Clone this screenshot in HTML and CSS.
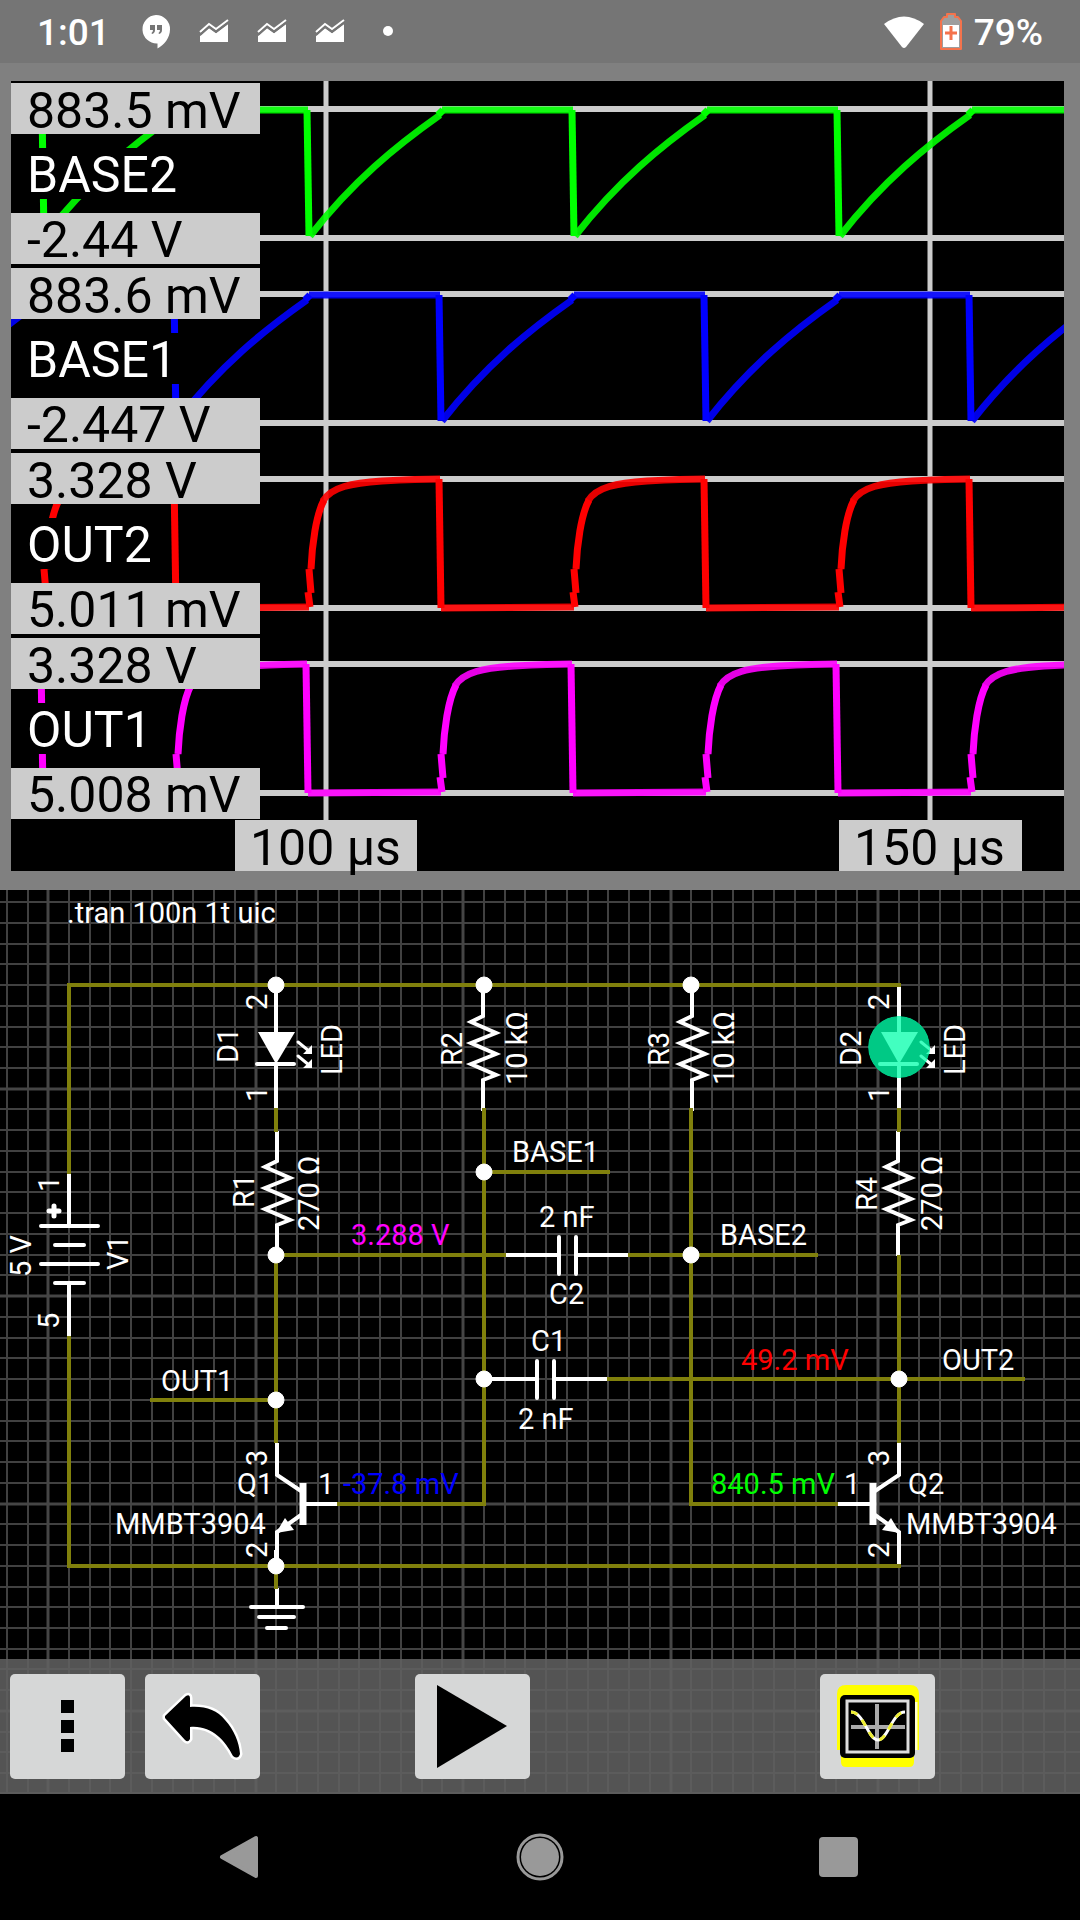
FILE: index.html
```html
<!DOCTYPE html>
<html lang="en">
<head>
<meta charset="utf-8">
<meta name="viewport" content="width=device-width, initial-scale=1">
<title>Circuit simulator</title>
<link rel="stylesheet" href="styles.css">
</head>
<body>
<header class="status">
  <span class="status-text">1:01</span>
  <div class="notices">
    <svg class="notice" viewBox="0 0 28 34" aria-hidden="true"><path fill="#fff" d="M14 0a14 14 0 0 1 14 14.500C28 23 22 30 15.500 33.500V28.500A14 14 0 0 1 14 0Z"/><path fill="#757575" d="M8 10h5v5q0 3-3 4l-.5-1q1.500-1 1.500-3H8zM15 10h5v5q0 3-3 4l-.5-1q1.500-1 1.500-3h-3z"/></svg>
    <svg class="notice" viewBox="0 -7 28 34" aria-hidden="true"><path fill="#fff" d="M0 20v-6l9-8 7 5L28 2v18z"/><path fill="none" stroke="#fff" stroke-width="2" d="M0 10l9-8 7 5L28-2"/><path fill="none" stroke="#757575" stroke-width="2" d="M0 13l9-8 7 5L28 1"/></svg>
    <svg class="notice" viewBox="0 -7 28 34" aria-hidden="true"><path fill="#fff" d="M0 20v-6l9-8 7 5L28 2v18z"/><path fill="none" stroke="#fff" stroke-width="2" d="M0 10l9-8 7 5L28-2"/><path fill="none" stroke="#757575" stroke-width="2" d="M0 13l9-8 7 5L28 1"/></svg>
    <svg class="notice" viewBox="0 -7 28 34" aria-hidden="true"><path fill="#fff" d="M0 20v-6l9-8 7 5L28 2v18z"/><path fill="none" stroke="#fff" stroke-width="2" d="M0 10l9-8 7 5L28-2"/><path fill="none" stroke="#757575" stroke-width="2" d="M0 13l9-8 7 5L28 1"/></svg>
    <svg class="notice" viewBox="0 0 28 34" aria-hidden="true"><circle cx="14" cy="16" r="5" fill="#fff"/></svg>
  </div>
  <div class="system">
    <svg class="wifi" viewBox="0 0 40 32" aria-hidden="true"><path fill="#fff" d="M0 8Q20-7 40 8L22 31q-2 2-4 0z"/></svg>
    <svg class="battery" viewBox="0 0 22 37" aria-hidden="true"><path fill="#9e9e9e" stroke="#f4734c" stroke-width="2" stroke-linejoin="round" d="M7 1h8v3h3l3 4v28H1V8l3-4h3z"/><path fill="#fff" d="M3 12h16v22H3z"/><path stroke="#f4734c" stroke-width="3" d="M11 13v14M5 20h12"/></svg>
    <span class="status-text">79%</span>
  </div>
</header>

<main>
<section class="scope" aria-label="Waveforms">
<svg class="drawing" viewBox="0 63 1080 827">
  <defs>
    <clipPath id="plot"><rect x="11" y="81" width="1053" height="790"/></clipPath>
    <g id="base-cycle">
      <path d="M307 110L309 236"/>
      <path class="slope" d="M310 236C353 181 396 146 440 115"/>
      <path d="M438 115L443 110"/>
      <path class="slope" d="M442 110H573"/>
    </g>
    <g id="out-cycle">
      <path d="M310 607L308 592M311 593L309 569M311 569C312 545 316 515 324 500"/>
      <path class="slope" d="M323 501C331 487 352 483 382 481C400 480 420 479 440 479"/>
      <path d="M439 479L441 608"/>
      <path class="slope" d="M441 608L574 607"/>
    </g>
    <g id="base-trace">
      <use href="#base-cycle" x="-530"/><use href="#base-cycle" x="-265"/><use href="#base-cycle"/><use href="#base-cycle" x="265"/><use href="#base-cycle" x="530"/>
    </g>
    <g id="out-trace">
      <use href="#out-cycle" x="-530"/><use href="#out-cycle" x="-265"/><use href="#out-cycle"/><use href="#out-cycle" x="265"/><use href="#out-cycle" x="530"/>
    </g>
  </defs>
  <rect x="11" y="81" width="1053" height="790"/>
  <path class="rule" d="M11 109H1064M11 238H1064M11 294H1064M11 423H1064M11 479H1064M11 608H1064M11 664H1064M11 793H1064"/>
  <path class="rule upright" d="M326 81V820M930 81V820"/>
  <g clip-path="url(#plot)" class="traces">
    <use href="#base-trace" stroke="#00ff00"/>
    <use href="#base-trace" x="132" y="185" stroke="#0000ff"/>
    <use href="#out-trace" stroke="#ff0000"/>
    <use href="#out-trace" x="132" y="185" stroke="#ff00ff"/>
  </g>
  <g>
    <rect x="11" y="148" width="181" height="51"/>
    <rect x="11" y="333" width="171" height="51"/>
    <rect x="11" y="518" width="155" height="51"/>
    <rect x="11" y="703" width="155" height="51"/>
    <rect x="11" y="264" width="249" height="4"/>
    <rect x="11" y="449" width="249" height="4"/>
    <rect x="11" y="634" width="249" height="4"/>
  </g>
  <g class="tag">
    <rect x="11" y="83" width="249" height="51"/>
    <rect x="11" y="213" width="249" height="51"/>
    <rect x="11" y="268" width="249" height="51"/>
    <rect x="11" y="398" width="249" height="51"/>
    <rect x="11" y="453" width="249" height="51"/>
    <rect x="11" y="583" width="249" height="51"/>
    <rect x="11" y="638" width="249" height="51"/>
    <rect x="11" y="768" width="249" height="51"/>
    <rect x="235" y="820" width="182" height="51"/>
    <rect x="839" y="820" width="183" height="51"/>
  </g>
  <g class="reading">
    <text x="27" y="128">883.5 mV</text>
    <text x="27" y="257">-2.44 V</text>
    <text x="27" y="313">883.6 mV</text>
    <text x="27" y="442">-2.447 V</text>
    <text x="27" y="498">3.328 V</text>
    <text x="27" y="627">5.011 mV</text>
    <text x="27" y="683">3.328 V</text>
    <text x="27" y="812">5.008 mV</text>
    <text x="250" y="865">100 µs</text>
    <text x="854" y="865">150 µs</text>
  </g>
  <g class="reading signal">
    <text x="27" y="192">BASE2</text>
    <text x="27" y="377">BASE1</text>
    <text x="27" y="562">OUT2</text>
    <text x="27" y="747">OUT1</text>
  </g>
</svg>
</section>

<section class="board" aria-label="Schematic">
<svg class="drawing" viewBox="0 890 1080 904">
  <defs>
    <path id="resistor" d="M0 0V30L-12 36L13 47L-12 57L13 68L-12 78L13 89L0 94V125"/>
    <g id="led">
      <path d="M0 985V1032M0 1064V1110"/>
      <path class="solid" d="M-18 1032H19L0 1064Z"/>
      <path class="round" d="M-19 1064H18"/>
      <path class="round arrow" d="M22 1042L33 1051M22 1056L33 1065"/>
      <path class="solid" d="M36 1045V1054H27ZM36 1059V1068H27Z"/>
    </g>
    <g id="transistor">
      <path d="M277 1443V1475L301 1491M301 1515L277 1532V1566M305 1504H338"/>
      <path class="channel" d="M303 1483V1525"/>
      <path class="solid" d="M276 1533L285 1518L294 1530Z"/>
    </g>
    <clipPath id="glow"><circle cx="899" cy="1047" r="31"/></clipPath>
  </defs>
  <rect y="890" width="1080" height="904"/>
  <path class="grid" d="M7 890v904M28 890v904M69 890v904M90 890v904M110 890v904M131 890v904M152 890v904M173 890v904M193 890v904M214 890v904M235 890v904M276 890v904M297 890v904M318 890v904M339 890v904M359 890v904M380 890v904M401 890v904M422 890v904M442 890v904M484 890v904M505 890v904M525 890v904M546 890v904M567 890v904M588 890v904M608 890v904M629 890v904M650 890v904M691 890v904M712 890v904M733 890v904M753 890v904M774 890v904M795 890v904M816 890v904M836 890v904M857 890v904M899 890v904M919 890v904M940 890v904M961 890v904M982 890v904M1002 890v904M1023 890v904M1044 890v904M1065 890v904"/>
  <path class="grid" d="M0 902h1080M0 923h1080M0 944h1080M0 964h1080M0 985h1080M0 1006h1080M0 1027h1080M0 1047h1080M0 1068h1080M0 1109h1080M0 1130h1080M0 1151h1080M0 1172h1080M0 1192h1080M0 1213h1080M0 1234h1080M0 1255h1080M0 1275h1080M0 1317h1080M0 1338h1080M0 1358h1080M0 1379h1080M0 1400h1080M0 1421h1080M0 1441h1080M0 1462h1080M0 1483h1080M0 1524h1080M0 1545h1080M0 1566h1080M0 1587h1080M0 1607h1080M0 1628h1080M0 1649h1080M0 1669h1080M0 1690h1080M0 1732h1080M0 1752h1080M0 1773h1080M0 1793h1080"/>
  <path class="grid major" d="M48 890v904M256 890v904M463 890v904M671 890v904M878 890v904M0 1089h1080M0 1296h1080M0 1504h1080M0 1711h1080"/>

  <g class="symbol">
    <use href="#led" x="276"/>
    <use href="#led" x="899"/>
    <use href="#resistor" x="277" y="1131"/>
    <use href="#resistor" x="483" y="986"/>
    <use href="#resistor" x="692" y="986"/>
    <use href="#resistor" x="898" y="1131"/>
    <use href="#transistor"/>
    <use href="#transistor" transform="translate(1176 0) scale(-1 1)"/>
    <path d="M69 1173V1226M69 1283V1337"/>
    <path class="round" d="M41 1226H98M55 1245H84M41 1264H98M55 1283H84"/>
    <path class="round plus" d="M49 1211H59M54 1206V1216"/>
    <path d="M506 1255H559M576 1255H628M484 1379H537M554 1379H607"/>
    <path class="round" d="M559 1237V1274M576 1237V1274M537 1361V1398M554 1361V1398"/>
    <path d="M277 1588V1607"/>
    <path class="round" d="M251 1607H303M259 1617H294M267 1628H286"/>
  </g>
  <g clip-path="url(#glow)">
    <circle cx="899" cy="1047" r="31" fill="#00c985"/>
    <use href="#led" x="899" class="symbol lit"/>
  </g>

  <path class="wire" d="M69 1174V985H901M69 1336V1566H901M276 1108V1132M899 1108V1132M276 1255V1443M899 1255V1443M484 1108V1504H337M691 1108V1504H838M484 1172H610M276 1255H506M628 1255H818M607 1379H1025M150 1400H276M276 1566V1589"/>
  <g class="symbol"><path d="M276 985V1000M483 985V1000M692 985V1000M899 987V1010M276 1550V1566"/></g>
  <g fill="#fff" stroke="#fff">
    <circle cx="276" cy="985" r="8"/><circle cx="484" cy="985" r="8"/><circle cx="691" cy="985" r="8"/>
    <circle cx="276" cy="1255" r="8"/><circle cx="691" cy="1255" r="8"/><circle cx="484" cy="1172" r="8"/>
    <circle cx="484" cy="1379" r="8"/><circle cx="899" cy="1379" r="8"/><circle cx="276" cy="1400" r="8"/><circle cx="276" cy="1566" r="8"/>
  </g>

  <g class="label">
    <text x="67" y="923">.tran 100n 1t uic</text>
    <text x="512" y="1162">BASE1</text>
    <text x="720" y="1245">BASE2</text>
    <text x="539" y="1227">2 nF</text>
    <text x="549" y="1304">C2</text>
    <text x="531" y="1351">C1</text>
    <text x="518" y="1429">2 nF</text>
    <text x="942" y="1370">OUT2</text>
    <text x="161" y="1391">OUT1</text>
    <text x="237" y="1494">Q1</text>
    <text x="115" y="1534">MMBT3904</text>
    <text x="318" y="1494">1</text>
    <text x="844" y="1494">1</text>
    <text x="908" y="1494">Q2</text>
    <text x="906" y="1534">MMBT3904</text>
    <text x="351" y="1245" fill="#ff00ff">3.288 V</text>
    <text x="741" y="1370" fill="#ff0000">49.2 mV</text>
    <text x="343" y="1494" fill="#0000ff">-37.8 mV</text>
    <text x="711" y="1494" fill="#00ff00">840.5 mV</text>
    <text transform="translate(267 1010) rotate(-90)">2</text>
    <text transform="translate(238 1063) rotate(-90)">D1</text>
    <text transform="translate(267 1102) rotate(-90)">1</text>
    <text transform="translate(342 1075) rotate(-90)">LED</text>
    <text transform="translate(254 1208) rotate(-90)">R1</text>
    <text transform="translate(319 1231) rotate(-90)">270 Ω</text>
    <text transform="translate(128 1270) rotate(-90)">V1</text>
    <text transform="translate(31 1277) rotate(-90)">5 V</text>
    <text transform="translate(59 1192) rotate(-90)">1</text>
    <text transform="translate(59 1329) rotate(-90)">5</text>
    <text transform="translate(462 1066) rotate(-90)">R2</text>
    <text transform="translate(527 1085) rotate(-90)">10 kΩ</text>
    <text transform="translate(669 1066) rotate(-90)">R3</text>
    <text transform="translate(734 1085) rotate(-90)">10 kΩ</text>
    <text transform="translate(889 1010) rotate(-90)">2</text>
    <text transform="translate(861 1066) rotate(-90)">D2</text>
    <text transform="translate(889 1102) rotate(-90)">1</text>
    <text transform="translate(965 1075) rotate(-90)">LED</text>
    <text transform="translate(877 1211) rotate(-90)">R4</text>
    <text transform="translate(942 1231) rotate(-90)">270 Ω</text>
    <text transform="translate(267 1466) rotate(-90)">3</text>
    <text transform="translate(267 1558) rotate(-90)">2</text>
    <text transform="translate(889 1466) rotate(-90)">3</text>
    <text transform="translate(889 1558) rotate(-90)">2</text>
  </g>
</svg>
<div class="toolbar" role="toolbar" aria-label="Tools">
  <button type="button" class="tool menu" aria-label="Menu"><svg viewBox="0 0 115 105"><path d="M51 26h13v13H51zM51 46h13v13H51zM51 65h13v13H51z"/></svg></button>
  <button type="button" class="tool undo" aria-label="Undo"><svg viewBox="0 0 115 105"><path stroke="#fff" stroke-width="5" stroke-linejoin="round" paint-order="stroke" d="M20 42L41 22Q45 20 45 24V33C60 32 72 36 80 46C89 56 94 68 95 80Q93 86 88 82C80 66 66 51 45 53V65Q43 69 40 66L20 44Z"/></svg></button>
  <button type="button" class="tool play" aria-label="Run"><svg viewBox="0 0 115 105"><path d="M22 11L92 52L22 94Z"/></svg></button>
  <button type="button" class="tool plots" aria-label="Waveforms"><svg viewBox="0 0 115 105"><path fill="#ff0" d="M17 76V20Q17 11 26 11H90Q99 11 99 20V76H94V88Q94 93 89 93H26Q21 93 21 88V76Z"/><path stroke="#ffffd0" stroke-width="3" d="M96 28V76"/><rect x="20" y="21" width="75" height="63" rx="5"/><rect x="27" y="27" width="61" height="51" fill="none" stroke="#ddd" stroke-width="3"/><path stroke="#aaa" stroke-width="4" d="M57 30V75M31 53H85"/><path fill="none" stroke="#fff" stroke-width="3" d="M31 38C44 38 48 66 58 66S72 38 85 38"/><path fill="none" stroke="#ee3" stroke-width="3" stroke-dasharray="7 7" d="M31 38C44 38 48 66 58 66S72 38 85 38"/></svg></button>
</div>
</section>
</main>

<nav class="nav" aria-label="System">
  <button type="button" aria-label="Back"><svg viewBox="0 0 48 48"><path d="M40 5V43L6 24Z" stroke="#999" stroke-width="4" stroke-linejoin="round"/></svg></button>
  <button type="button" aria-label="Home"><svg viewBox="0 0 48 48"><circle cx="24" cy="24" r="19"/><circle cx="24" cy="24" r="22" fill="none" stroke="#999" stroke-width="3"/></svg></button>
  <button type="button" aria-label="Recent apps"><svg viewBox="0 0 48 48"><rect x="3" y="4" width="39" height="40" rx="4"/></svg></button>
</nav>
</body>
</html>
```
FILE: styles.css
```css
* {
  box-sizing: border-box;
}

body {
  margin: 0;
  background: #000;
  color: #fff;
  font-family: Roboto, "Liberation Sans", sans-serif;
}

button {
  display: block;
  border: 0;
  padding: 0;
  background: none;
}

/* Status bar */
.status {
  display: flex;
  align-items: center;
  height: 63px;
  padding: 0 37px;
  background: #757575;
}

.status-text {
  padding-top: 2px;
  font-size: 37px;
  font-weight: 500;
  line-height: 40px;
}

.notices {
  display: flex;
  gap: 30px;
  margin-left: 32px;
}

.notice {
  width: 28px;
  height: 34px;
  overflow: visible;
}

.system {
  display: flex;
  align-items: center;
  gap: 16px;
  margin-left: auto;
}

.wifi {
  width: 40px;
  height: 32px;
}

.battery {
  width: 22px;
  height: 37px;
  margin-right: -4px;
}

.drawing {
  display: block;
  width: 100%;
  height: auto;
}

/* Waveform plot */
.scope {
  background: #808080;
}

.rule {
  fill: none;
  stroke: #ccc;
  stroke-width: 6px;
}

.upright {
  stroke-width: 5px;
}

.traces {
  fill: none;
  stroke-width: 7px;
  stroke-linejoin: round;
}

.slope {
  opacity: 0.9;
}

.tag {
  fill: #ccc;
}

.reading {
  font-size: 50px;
}

.signal {
  fill: #fff;
}

/* Schematic */
.board {
  display: grid;
}

.board > * {
  grid-area: 1 / 1;
}

.grid {
  stroke: #414141;
  stroke-width: 2px;
}

.major {
  stroke: #454545;
  stroke-width: 3px;
}

.wire {
  fill: none;
  stroke: #80800c;
  stroke-width: 4px;
}

.symbol {
  fill: none;
  stroke: #fff;
  stroke-width: 4px;
  color: #fff;
}

.lit {
  stroke: #42ffc0;
  color: #42ffc0;
}

.solid {
  fill: currentColor;
  stroke: none;
}

.round {
  stroke-linecap: round;
}

.arrow {
  stroke-width: 3px;
}

.plus {
  stroke-width: 5px;
}

.channel {
  stroke-width: 7px;
}

.label {
  fill: #fff;
  font-size: 29px;
}

/* Toolbar over the foot of the schematic */
.toolbar {
  display: grid;
  grid-template-columns: repeat(8, 1fr);
  align-self: end;
  padding: 15px 0;
  background: rgba(96, 96, 96, 0.87);
}

.tool {
  height: 105px;
  margin: 0 10px;
  border-radius: 5px;
  background: #d6d7d7;
}

.tool svg {
  display: block;
  width: 100%;
  height: 100%;
}

.play {
  grid-column: 4;
}

.plots {
  grid-column: 7;
}

/* Navigation bar */
.nav {
  display: grid;
  grid-template-columns: repeat(3, 1fr);
  align-items: center;
  justify-items: center;
  height: 126px;
  padding: 0 90px;
  background: #000;
}

.nav svg {
  display: block;
  width: 48px;
  height: 48px;
  fill: #999;
}
```
